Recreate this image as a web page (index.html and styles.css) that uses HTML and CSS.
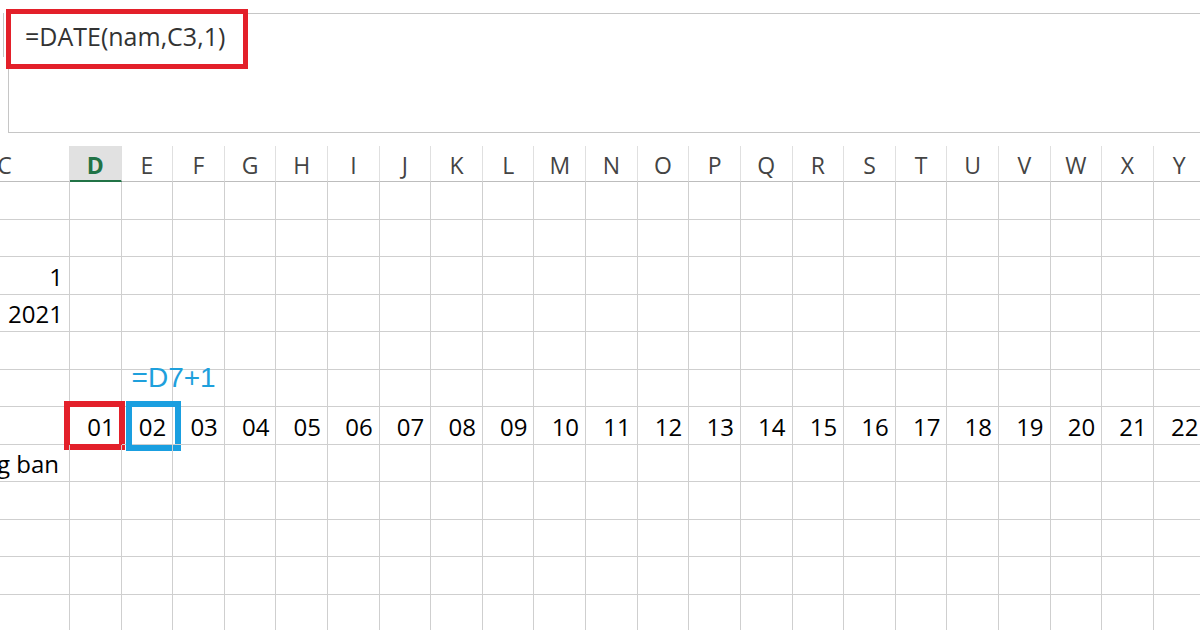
FILE: index.html
```
<!DOCTYPE html>
<html>
<head>
<meta charset="utf-8">
<link rel="stylesheet" href="styles.css">
</head>
<body>
<div class="top">
  <div class="fx-row">
    <div class="fx-edge"></div>
    <div class="fx-box"></div>
  </div>
  <div class="fx-callout">=DATE(nam,C3,1)</div>
</div>
<div class="sheet">
  <div class="row hdr">
    <div class="c colC">C</div><div class="c sel">D</div><div class="c">E</div><div class="c">F</div><div class="c">G</div><div class="c">H</div><div class="c">I</div><div class="c">J</div><div class="c">K</div><div class="c">L</div><div class="c">M</div><div class="c">N</div><div class="c">O</div><div class="c">P</div><div class="c">Q</div><div class="c">R</div><div class="c">S</div><div class="c">T</div><div class="c">U</div><div class="c">V</div><div class="c">W</div><div class="c">X</div><div class="c">Y</div>
  </div>
  <div class="row">
    <div class="c colC"></div><div class="c"></div><div class="c"></div><div class="c"></div><div class="c"></div><div class="c"></div><div class="c"></div><div class="c"></div><div class="c"></div><div class="c"></div><div class="c"></div><div class="c"></div><div class="c"></div><div class="c"></div><div class="c"></div><div class="c"></div><div class="c"></div><div class="c"></div><div class="c"></div><div class="c"></div><div class="c"></div><div class="c"></div><div class="c"></div>
  </div>
  <div class="row">
    <div class="c colC"></div><div class="c"></div><div class="c"></div><div class="c"></div><div class="c"></div><div class="c"></div><div class="c"></div><div class="c"></div><div class="c"></div><div class="c"></div><div class="c"></div><div class="c"></div><div class="c"></div><div class="c"></div><div class="c"></div><div class="c"></div><div class="c"></div><div class="c"></div><div class="c"></div><div class="c"></div><div class="c"></div><div class="c"></div><div class="c"></div>
  </div>
  <div class="row">
    <div class="c colC">1</div><div class="c"></div><div class="c"></div><div class="c"></div><div class="c"></div><div class="c"></div><div class="c"></div><div class="c"></div><div class="c"></div><div class="c"></div><div class="c"></div><div class="c"></div><div class="c"></div><div class="c"></div><div class="c"></div><div class="c"></div><div class="c"></div><div class="c"></div><div class="c"></div><div class="c"></div><div class="c"></div><div class="c"></div><div class="c"></div>
  </div>
  <div class="row">
    <div class="c colC">2021</div><div class="c"></div><div class="c"></div><div class="c"></div><div class="c"></div><div class="c"></div><div class="c"></div><div class="c"></div><div class="c"></div><div class="c"></div><div class="c"></div><div class="c"></div><div class="c"></div><div class="c"></div><div class="c"></div><div class="c"></div><div class="c"></div><div class="c"></div><div class="c"></div><div class="c"></div><div class="c"></div><div class="c"></div><div class="c"></div>
  </div>
  <div class="row">
    <div class="c colC"></div><div class="c"></div><div class="c"></div><div class="c"></div><div class="c"></div><div class="c"></div><div class="c"></div><div class="c"></div><div class="c"></div><div class="c"></div><div class="c"></div><div class="c"></div><div class="c"></div><div class="c"></div><div class="c"></div><div class="c"></div><div class="c"></div><div class="c"></div><div class="c"></div><div class="c"></div><div class="c"></div><div class="c"></div><div class="c"></div>
  </div>
  <div class="row">
    <div class="c colC"></div><div class="c"></div><div class="c note">=D7+1</div><div class="c"></div><div class="c"></div><div class="c"></div><div class="c"></div><div class="c"></div><div class="c"></div><div class="c"></div><div class="c"></div><div class="c"></div><div class="c"></div><div class="c"></div><div class="c"></div><div class="c"></div><div class="c"></div><div class="c"></div><div class="c"></div><div class="c"></div><div class="c"></div><div class="c"></div><div class="c"></div>
  </div>
  <div class="row">
    <div class="c colC"></div><div class="c mark-red">01</div><div class="c mark-blue">02</div><div class="c">03</div><div class="c">04</div><div class="c">05</div><div class="c">06</div><div class="c">07</div><div class="c">08</div><div class="c">09</div><div class="c">10</div><div class="c">11</div><div class="c">12</div><div class="c">13</div><div class="c">14</div><div class="c">15</div><div class="c">16</div><div class="c">17</div><div class="c">18</div><div class="c">19</div><div class="c">20</div><div class="c">21</div><div class="c">22</div>
  </div>
  <div class="row">
    <div class="c colC text">g ban</div><div class="c"></div><div class="c"></div><div class="c"></div><div class="c"></div><div class="c"></div><div class="c"></div><div class="c"></div><div class="c"></div><div class="c"></div><div class="c"></div><div class="c"></div><div class="c"></div><div class="c"></div><div class="c"></div><div class="c"></div><div class="c"></div><div class="c"></div><div class="c"></div><div class="c"></div><div class="c"></div><div class="c"></div><div class="c"></div>
  </div>
  <div class="row">
    <div class="c colC"></div><div class="c"></div><div class="c"></div><div class="c"></div><div class="c"></div><div class="c"></div><div class="c"></div><div class="c"></div><div class="c"></div><div class="c"></div><div class="c"></div><div class="c"></div><div class="c"></div><div class="c"></div><div class="c"></div><div class="c"></div><div class="c"></div><div class="c"></div><div class="c"></div><div class="c"></div><div class="c"></div><div class="c"></div><div class="c"></div>
  </div>
  <div class="row">
    <div class="c colC"></div><div class="c"></div><div class="c"></div><div class="c"></div><div class="c"></div><div class="c"></div><div class="c"></div><div class="c"></div><div class="c"></div><div class="c"></div><div class="c"></div><div class="c"></div><div class="c"></div><div class="c"></div><div class="c"></div><div class="c"></div><div class="c"></div><div class="c"></div><div class="c"></div><div class="c"></div><div class="c"></div><div class="c"></div><div class="c"></div>
  </div>
  <div class="row">
    <div class="c colC"></div><div class="c"></div><div class="c"></div><div class="c"></div><div class="c"></div><div class="c"></div><div class="c"></div><div class="c"></div><div class="c"></div><div class="c"></div><div class="c"></div><div class="c"></div><div class="c"></div><div class="c"></div><div class="c"></div><div class="c"></div><div class="c"></div><div class="c"></div><div class="c"></div><div class="c"></div><div class="c"></div><div class="c"></div><div class="c"></div>
  </div>
  <div class="row">
    <div class="c colC"></div><div class="c"></div><div class="c"></div><div class="c"></div><div class="c"></div><div class="c"></div><div class="c"></div><div class="c"></div><div class="c"></div><div class="c"></div><div class="c"></div><div class="c"></div><div class="c"></div><div class="c"></div><div class="c"></div><div class="c"></div><div class="c"></div><div class="c"></div><div class="c"></div><div class="c"></div><div class="c"></div><div class="c"></div><div class="c"></div>
  </div>
</div>
</body>
</html>
```
FILE: styles.css
```
* { box-sizing: border-box; margin: 0; padding: 0; }
html, body { width: 1200px; height: 630px; overflow: hidden; background: #fff; }
body { font-family: "Open Sans", "Noto Sans", sans-serif; color: #000; position: relative; }

.top { position: relative; height: 146px; }
.fx-row { display: flex; padding-top: 13px; }
.fx-edge { width: 4px; height: 44px; border-right: 1px solid #c6c6c6; }
.fx-box { margin-left: 4px; flex: 1; height: 120px; border: 1px solid #c6c6c6; border-right: 0; }
.fx-callout {
  position: absolute; left: 6px; top: 9px; width: 242px; height: 60px;
  border: 5px solid #e3202a; background: #fff;
  padding: 5px 0 0 14px; font-size: 25px; line-height: 34px; color: #333; white-space: nowrap;
}

.sheet { margin-left: -60px; width: 1270px; }
.row { display: flex; height: 37.5px; }
.c {
  width: 51.62px; flex: none; position: relative;
  border-right: 1px solid #cfcfcf; border-bottom: 1px solid #cfcfcf;
  display: flex; align-items: flex-end; justify-content: flex-end;
  padding: 0 6px 5px 0; font-size: 24px; line-height: 24px; white-space: nowrap;
}
.c.colC { width: 130px; }
.c.text { padding-right: 10px; }

.hdr { height: 36px; }
.hdr .c {
  align-items: center; justify-content: center; padding: 3px 0 0 0;
  font-size: 23px; color: #444; border-right-color: #e0e0e0; border-bottom-color: #bdbdbd;
}
.hdr .c.sel { background: #e1e1e1; color: #217346; font-weight: 700; border-bottom: 2px solid #217346; }

.c.note {
  justify-content: flex-start; padding: 0 0 15px 10px; overflow: visible;
  font-family: "Liberation Sans", Arial, sans-serif; font-size: 28px; line-height: 27px; color: #1ea0dc;
}

.mark-red::after, .mark-blue::after { content: ""; position: absolute; }
.mark-red::after { left: -6px; right: -4px; top: -6px; bottom: -6px; border: 6px solid #e3202a; }
.mark-blue::after { left: 4px; right: -9px; top: -6px; bottom: -7px; border: 6px solid #1a9fe0; }
```
